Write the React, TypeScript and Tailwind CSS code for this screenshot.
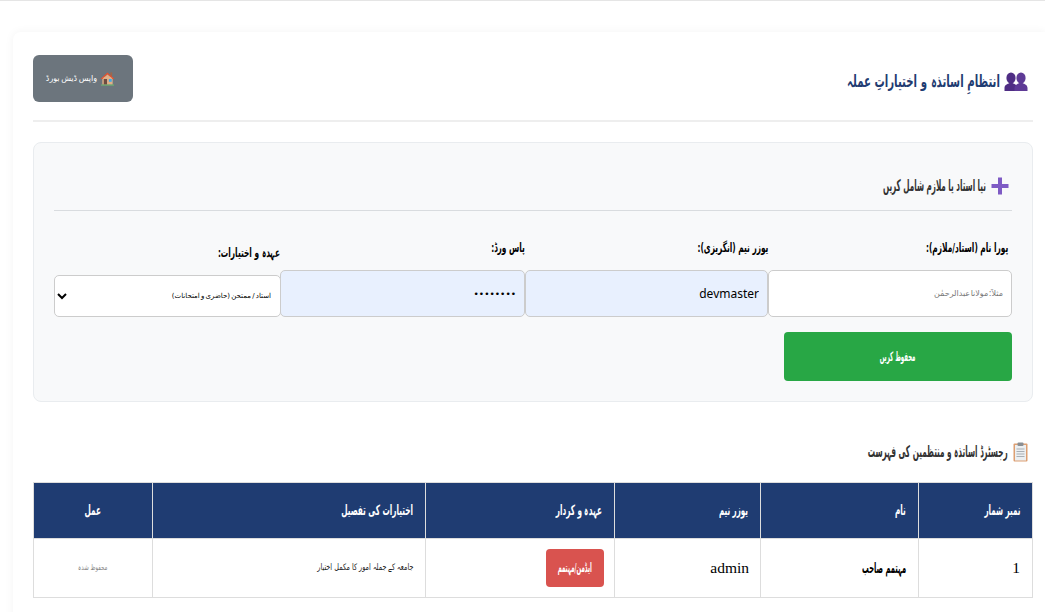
const urdu = "font-['DejaVu_Sans','Noto_Sans',sans-serif]";
// Nastaliq is not installed, so the wide fallback gets narrowed to the original text width
const narrow = "inline-block whitespace-nowrap origin-right";

function HouseIcon() {
  return (
    <svg viewBox="0 0 16 16" className="w-[15px] h-[15px] shrink-0">
      <rect x="11" y="1.5" width="2" height="4" fill="#a1664a" />
      <rect x="2.5" y="6.5" width="11" height="8" fill="#e0b088" />
      <path d="M0.5 8.5 L8 1.5 L15.5 8.5 L13.5 8.5 L8 3.8 L2.5 8.5 Z" fill="#e2512f" />
      <path d="M3 8 L8 3.8 L13 8 Z" fill="#e0b088" />
      <rect x="4" y="8.5" width="3.5" height="6" fill="#6d4c41" />
      <rect x="9.5" y="8.5" width="3" height="3" fill="#3fa9e8" />
      <rect x="1" y="14.5" width="14" height="1" fill="#6cc070" />
    </svg>
  );
}

function PeopleIcon() {
  return (
    <svg viewBox="0 0 24 19" className="w-6 h-[19px] shrink-0">
      <ellipse cx="7" cy="6" rx="4.6" ry="5.6" fill="#4f2d84" />
      <path d="M0.5 19 V16 C0.5 13 3.5 12 5.5 11 H8.5 C10.5 12 13.5 13 13.5 16 V19 Z" fill="#4f2d84" />
      <ellipse cx="17" cy="6" rx="4.6" ry="5.6" fill="#5e3a96" />
      <path d="M10.5 19 V16 C10.5 13 13.5 12 15.5 11 H18.5 C20.5 12 23.5 13 23.5 16 V19 Z" fill="#5e3a96" />
    </svg>
  );
}

function PlusIcon() {
  return (
    <svg viewBox="0 0 18 18" className="w-[18px] h-[18px] shrink-0">
      <path d="M7 0.5 H11 V7 H17.5 V11 H11 V17.5 H7 V11 H0.5 V7 H7 Z" fill="#7e5bc4" />
    </svg>
  );
}

function ClipboardIcon() {
  return (
    <svg viewBox="0 0 15 20" className="w-[15px] h-5 shrink-0">
      <rect x="0.5" y="1.5" width="14" height="18" rx="1" fill="#dd9f72" />
      <rect x="2" y="3" width="11" height="15.5" fill="#eceff1" />
      <rect x="4.5" y="0.5" width="6" height="3.5" rx="1" fill="#8a8f94" />
      <path d="M3.5 7 H11.5 M3.5 9.5 H11.5 M3.5 12 H11.5 M3.5 14.5 H11.5" stroke="#a9afb5" strokeWidth="1" />
    </svg>
  );
}

function Field({ label, labelClass, children }: { label: string; labelClass?: string; children: React.ReactNode }) {
  return (
    <div className="flex flex-col justify-end">
      <label className={`${urdu} text-[13px] leading-[18px] font-bold text-black mb-[13px] ${labelClass ?? ""}`}>
        <span className={`${narrow} scale-x-[0.57]`}>{label}</span>
      </label>
      {children}
    </div>
  );
}

const th = `${urdu} border border-[#ddd] bg-[#1f3c72] text-white text-[14px] font-bold px-[12px]`;
const td = "border border-[#ddd] px-[12px] align-middle";

export default function App() {
  return (
    <div dir="rtl" className={`${urdu} h-[612px] overflow-hidden bg-white border-t border-t-[#e5e5e5] pt-[31px] pl-[13px]`}>
      <div className="h-[640px] bg-white rounded-l-lg shadow-[0_0_10px_rgba(0,0,0,0.05)] pl-5 pr-3 pt-[23px]">
        <header className="flex items-center justify-between h-[47px] pr-[5px]">
          <h1 className="flex items-center gap-[4px] pt-[6px] text-[#1f3c72] text-[17px] font-bold">
            <PeopleIcon />
            <span className={`${narrow} scale-x-[0.6]`}>انتظامِ اساتذہ و اختیاراتِ عملہ</span>
          </h1>
          <a className="w-[100px] h-[47px] pr-[5px] rounded-md bg-[#6c757d] text-white text-[8px] [word-spacing:-1px] flex items-center justify-center gap-[3px]">
            <HouseIcon />
            واپس ڈیش بورڈ
          </a>
        </header>
        <div className="h-[2px] bg-[#eee] mt-[18px]" />

        <section className="mt-5 h-[260px] bg-[#f8f9fa] border border-[#e9ecef] rounded-lg px-5 pt-[29px]">
          <h2 className="flex items-center gap-[5px] h-[27px] pr-[3px] text-[#333] text-[16px] font-bold">
            <PlusIcon />
            <span className={`${narrow} scale-x-[0.45]`}>نیا استاد یا ملازم شامل کریں</span>
          </h2>
          <div className="h-px bg-[#d9dcdf] mt-[11px]" />

          <div className="grid grid-cols-[244px_243px_245px_226px] items-end mt-[28px]">
            <Field label="پورا نام (استاد/ملازم):" labelClass="pr-1">
              <input
                placeholder="مثلاً: مولانا عبدالرحمٰن"
                className={`${urdu} h-[47px] bg-white border border-[#ccc] rounded-[5px] px-2 text-[8px] [word-spacing:-2px] text-right outline-none placeholder:text-[#777]`}
              />
            </Field>
            <Field label="یوزر نیم (انگریزی):">
              <input
                defaultValue="devmaster"
                className="h-[47px] bg-[#e8f0fe] border border-[#ccc] rounded-[5px] px-2 text-[12px] text-right text-black outline-none font-['Noto_Sans',sans-serif]"
              />
            </Field>
            <Field label="پاس ورڈ:">
              <input
                type="password"
                defaultValue="12345678"
                className="h-[47px] bg-[#e8f0fe] border border-[#ccc] rounded-[5px] px-2 text-[9px] text-right text-black outline-none"
              />
            </Field>
            <Field label="عہدہ و اختیارات:">
              <select className={`${urdu} h-[42px] w-[227px] -mr-px bg-white border border-[#ccc] rounded-[5px] pr-[5px] text-[7px] [word-spacing:-1px] text-black outline-none`}>
                <option>استاد / ممتحن (حاضری و امتحانات)</option>
              </select>
            </Field>
          </div>

          <button className={`${urdu} block w-[228px] h-[49px] mt-[15px] bg-[#28a745] text-white text-[13px] font-bold rounded-[4px]`}>
            <span className="inline-block whitespace-nowrap scale-x-[0.42]">محفوظ کریں</span>
          </button>
        </section>

        <h2 className="flex items-center gap-[5px] mt-[35px] h-[30px] pr-[5px] text-[#333] text-[16px] font-bold">
          <ClipboardIcon />
          <span className={`${narrow} scale-x-[0.455]`}>رجسٹرڈ اساتذہ و منتظمین کی فہرست</span>
        </h2>

        <table className="w-[999px] mt-[15px] border-collapse table-fixed">
          <colgroup>
            <col className="w-[114px]" />
            <col className="w-[158px]" />
            <col className="w-[146px]" />
            <col className="w-[189px]" />
            <col className="w-[273px]" />
            <col className="w-[119px]" />
          </colgroup>
          <thead>
            <tr className="h-[56px]">
              <th className={`${th} text-right`}><span className={`${narrow} scale-x-[0.51]`}>نمبر شمار</span></th>
              <th className={`${th} text-right`}><span className={`${narrow} scale-x-[0.52]`}>نام</span></th>
              <th className={`${th} text-right`}><span className={`${narrow} scale-x-[0.51]`}>یوزر نیم</span></th>
              <th className={`${th} text-right`}><span className={`${narrow} scale-x-[0.52]`}>عہدہ و کردار</span></th>
              <th className={`${th} text-right`}><span className={`${narrow} scale-x-[0.52]`}>اختیارات کی تفصیل</span></th>
              <th className={`${th} text-center`}><span className="inline-block scale-x-[0.52]">عمل</span></th>
            </tr>
          </thead>
          <tbody>
            <tr className="h-[59px]">
              <td className={`${td} text-right font-['Liberation_Serif',serif] text-[15.5px] text-black`}>1</td>
              <td className={`${td} text-right text-[15px] font-bold text-black`}><span className={`${narrow} scale-x-[0.45]`}>مہتمم صاحب</span></td>
              <td className={`${td} text-right pr-[11px] font-['Liberation_Serif',serif] text-[15.5px] text-black`}>admin</td>
              <td className={`${td} text-right pr-[10px]`}>
                <span className="inline-flex items-center justify-center w-[58px] h-[38px] rounded-[4px] bg-[#d9534f] text-white text-[13px] font-bold">
                  <span className="inline-block whitespace-nowrap scale-x-[0.42]">ایڈمن/مہتمم</span>
                </span>
              </td>
              <td className={`${td} text-right text-[9px] text-[#222]`}><span className={`${narrow} scale-x-[0.72]`}>جامعہ کے جملہ امور کا مکمل اختیار</span></td>
              <td className={`${td} text-center text-[8px] text-[#888]`}><span className="inline-block whitespace-nowrap scale-x-[0.68]">محفوظ شدہ</span></td>
            </tr>
          </tbody>
        </table>
      </div>
    </div>
  );
}
